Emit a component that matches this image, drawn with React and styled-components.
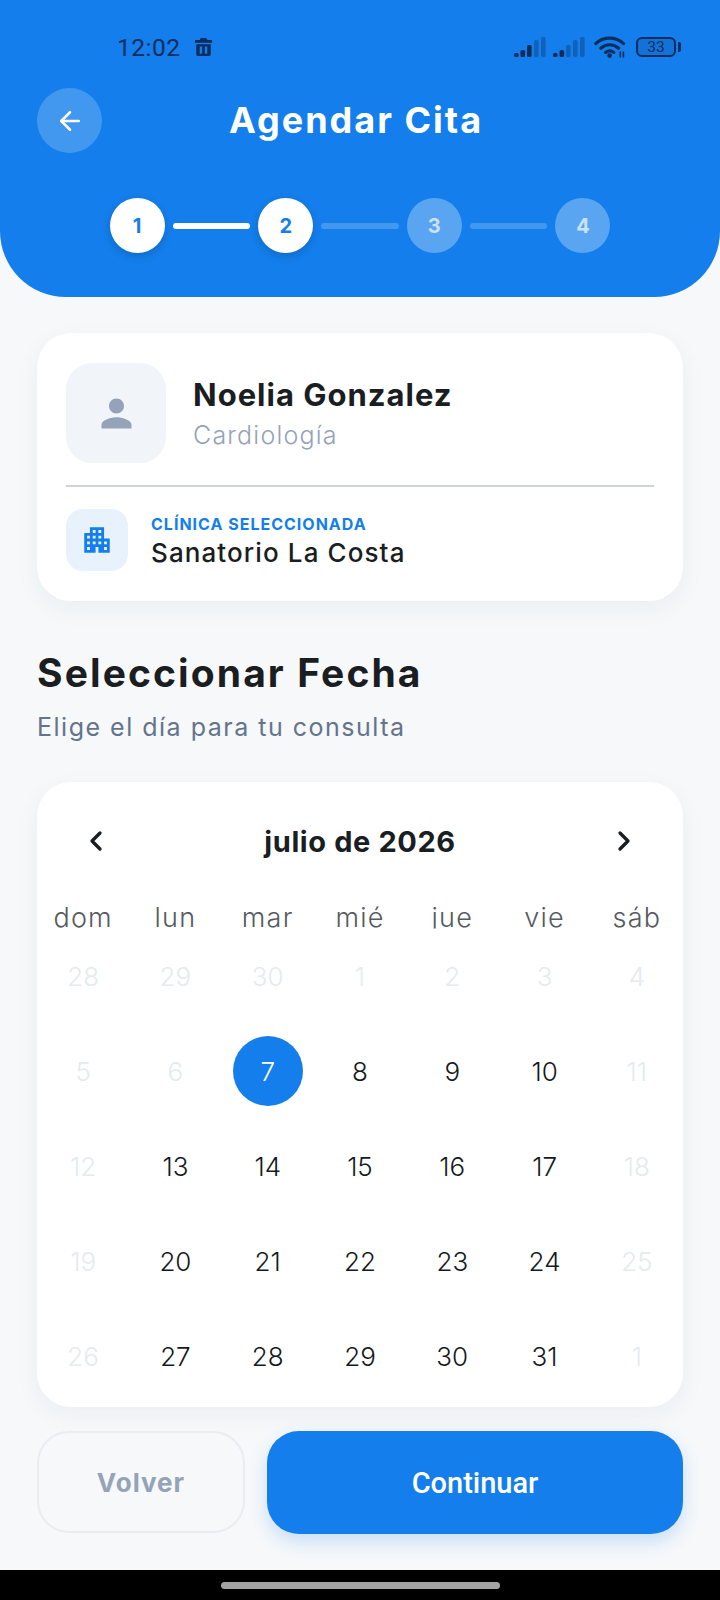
import React from "react";
import styled, { createGlobalStyle } from "styled-components";
import { ArrowLeft, ChevronLeft, ChevronRight } from "lucide-react";
import { MdApartment, MdPerson } from "react-icons/md";

const Global = createGlobalStyle`
  html, body { margin: 0; padding: 0; background: #f6f8fa; }
  * { box-sizing: border-box; }
`;
const SANS = `Inter, "Noto Sans", sans-serif`;
const BLUE = "#137eec";
const INK = "#1a1d21";
const NAVY = "#0b2d5c";

const Screen = styled.div`
  width: 720px; height: 1600px; display: flex; flex-direction: column;
  background: #f6f8fa; font-family: ${SANS}; overflow: hidden;
`;
const Header = styled.header`
  height: 297px; flex: none; background: ${BLUE};
  border-radius: 0 0 66px 66px; padding-top: 30px;
`;
const StatusBar = styled.div`
  height: 34px; display: flex; align-items: center; padding: 0 44px 0 117px;
  color: ${NAVY};
`;
const Clock = styled.span`
  font: 400 24.5px "Roboto", sans-serif; letter-spacing: .5px;
`;
const StatusRight = styled.div`
  margin-left: auto; display: flex; align-items: center;
`;
const Battery = styled.div`
  width: 40px; height: 20px; margin-left: 10px; border: 2px solid ${NAVY}; border-radius: 6px;
  background: rgba(11,45,92,.14); display: flex; align-items: center; justify-content: center;
  font: 400 15.5px "Roboto", sans-serif; position: relative;
  &::after {
    content: ""; position: absolute; right: -7px; top: 3px; width: 3px; height: 10px;
    background: ${NAVY}; border-radius: 0 2px 2px 0;
  }
`;
const TitleRow = styled.div`
  margin-top: 24px; padding: 0 45px 0 37px; display: grid; grid-template-columns: 65px 1fr 65px;
  align-items: center;
`;
const BackButton = styled.button`
  width: 65px; height: 65px; border: 0; border-radius: 50%; padding: 0;
  background: rgba(255,255,255,.2); color: #fff; display: flex; align-items: center; justify-content: center;
`;
const Title = styled.h1`
  margin: -2px 0 0; text-align: center; color: #fff; font-size: 36px; font-weight: 700; letter-spacing: 2px;
`;
const Stepper = styled.div`
  margin-top: 45px; display: flex; align-items: center; justify-content: center; gap: 8px;
`;
const Step = styled.div`
  width: 55px; height: 55px; border-radius: 50%; display: flex; align-items: center; justify-content: center;
  font-size: 20px; font-weight: 700;
  background: ${p => (p.$on ? "#fff" : "rgba(255,255,255,.3)")};
  color: ${p => (p.$on ? BLUE : "rgba(255,255,255,.7)")};
  box-shadow: ${p => (p.$on ? "0 3px 8px rgba(0,0,0,.16)" : "none")};
`;
const StepLine = styled.div`
  width: 77.6px; height: 6px; border-radius: 3px;
  background: ${p => (p.$on ? "#fff" : "rgba(255,255,255,.2)")};
`;
const Main = styled.main`
  flex: 1; padding: 36px 37px 0; display: flex; flex-direction: column;
`;
const Card = styled.section`
  background: #fff; border-radius: 34px; box-shadow: 0 8px 24px rgba(30,50,80,.05);
`;
const DoctorCard = styled(Card)`
  padding: 30px 29px;
`;
const DoctorRow = styled.div`
  display: flex; align-items: center; gap: 27px;
`;
const Avatar = styled.div`
  width: 100px; height: 100px; border-radius: 26px; background: #f1f5f9; color: #94a3b8;
  display: flex; align-items: center; justify-content: center;
`;
const DoctorText = styled.div`
  padding-top: 2px;
`;
const DoctorName = styled.div`
  font-size: 31px; font-weight: 700; color: ${INK}; line-height: 38px; letter-spacing: 1px;
`;
const Specialty = styled.div`
  font-size: 25px; font-weight: 300; color: #94a3b8; line-height: 34px; margin-top: 4px; letter-spacing: 1.2px;
`;
const Divider = styled.hr`
  margin: 22px 0; border: 0; height: 2px; background: #cfd2d6;
`;
const ClinicRow = styled.div`
  display: flex; align-items: center; gap: 23px;
`;
const ClinicIcon = styled.div`
  width: 62px; height: 62px; border-radius: 17px; background: #e7f2fd; color: ${BLUE};
  display: flex; align-items: center; justify-content: center;
`;
const ClinicText = styled.div`
  padding-top: 2px;
`;
const ClinicLabel = styled.div`
  font-size: 16px; font-weight: 700; color: ${BLUE}; letter-spacing: 1px; line-height: 20px;
`;
const ClinicName = styled.div`
  font-size: 26px; font-weight: 500; color: ${INK}; line-height: 32px; margin-top: 3px; letter-spacing: 1.1px;
`;
const SectionTitle = styled.h2`
  margin: 48px 0 0; font-size: 39px; font-weight: 700; color: ${INK}; line-height: 48px; letter-spacing: 2.1px;
`;
const SectionSub = styled.p`
  margin: 14px 0 0; font-size: 25px; font-weight: 400; color: #64748b; line-height: 32px; letter-spacing: 1.5px;
`;
const Calendar = styled(Card)`
  margin-top: 39px; padding-top: 27px; height: 625px; overflow: hidden;
`;
const MonthRow = styled.div`
  height: 64px; padding: 0 43px; display: flex; align-items: center; justify-content: space-between; color: ${INK};
`;
const MonthName = styled.div`
  font-size: 29px; font-weight: 700; color: ${INK}; letter-spacing: .6px;
`;
const Grid = styled.div`
  display: grid; grid-template-columns: repeat(7, 1fr); margin-top: 29px;
`;
const Weekday = styled.div`
  height: 32px; margin-bottom: -5.5px; clip-path: inset(0 0 5.5px 0); text-align: center;
  font-size: 27px; font-weight: 300; color: #555a60; line-height: 32px; letter-spacing: 1.2px;
`;
const DayCell = styled.div`
  height: 95px; display: flex; align-items: center; justify-content: center;
`;
const Day = styled.div`
  width: 70px; height: 70px; border-radius: 50%; display: flex; align-items: center; justify-content: center;
  font-size: 26px; font-weight: 300;
  background: ${p => (p.$selected ? BLUE : "transparent")};
  color: ${p => (p.$selected ? "#fff" : p.$muted ? "#e6eaef" : "#15181c")};
`;
const Actions = styled.div`
  margin-top: 24px; display: flex; gap: 22px;
`;
const GhostButton = styled.button`
  width: 208px; height: 102px; border-radius: 32px; border: 2px solid #e9edf2; background: transparent;
  color: #94a3b8; font: 700 26px ${SANS}; letter-spacing: 1px;
`;
const PrimaryButton = styled.button`
  flex: 1; height: 103px; border-radius: 32px; border: 0; background: ${BLUE}; color: #fff;
  font: 500 29px "Roboto", sans-serif; box-shadow: 0 8px 18px rgba(19,126,236,.2);
`;
const NavBar = styled.div`
  height: 30px; flex: none; background: #000; display: flex; justify-content: center; padding-top: 12px;
`;
const NavPill = styled.div`
  width: 279px; height: 7px; border-radius: 4px; background: #a3a3a3;
`;

const Trash = () => (
  <svg width="19" height="20" viewBox="0 0 20 20" style={{ marginLeft: 13 }}>
    <path fill={NAVY} d="M7 0.5h6l1 2h5v3H1v-3h5zM2.4 7h15.2v10.5a2 2 0 0 1-2 2H4.4a2 2 0 0 1-2-2zM6 9.5v7.5h2.6V9.5zm5.4 0v7.5H14V9.5z" />
  </svg>
);
const Signal = ({ dark, ml }) => (
  <svg width="32" height="20" viewBox="0 0 32 20" style={{ marginLeft: ml }}>
    {[[0, 16, 4], [6.5, 13, 7], [13, 8, 12], [20, 3, 17], [27, 0, 20]].map(([x, y, h], i) => (
      <rect key={i} x={x} y={y} width="4.6" height={h} rx="1.6" fill={NAVY} opacity={i < dark ? 1 : 0.35} />
    ))}
  </svg>
);
const Wifi = () => (
  <svg width="32" height="22" viewBox="0 0 32 22" style={{ marginLeft: 9 }}>
    <g fill="none" stroke={NAVY} strokeWidth="3.2" strokeLinecap="round">
      <path d="M1.8 7.6C9.6 .4 21.4 .4 29.6 7.6" />
      <path d="M6.8 12.2c5.2-4.6 12.6-4.6 17.8 0" />
      <path d="M11.6 16.4c2.6-2 5.6-2 8.2 0" />
    </g>
    <circle cx="15.6" cy="19.6" r="2.3" fill={NAVY} />
    <path d="M25.5 15.5h1.6v6h-1.6zM28.6 15.5h1.6v6h-1.6z" fill={NAVY} />
  </svg>
);

const WEEK = ["dom", "lun", "mar", "mié", "jue", "vie", "sáb"];
const DAYS = [
  28, 29, 30, 1, 2, 3, 4,
  5, 6, 7, 8, 9, 10, 11,
  12, 13, 14, 15, 16, 17, 18,
  19, 20, 21, 22, 23, 24, 25,
  26, 27, 28, 29, 30, 31, 1,
];
const isMuted = i => i < 7 || i % 7 === 0 || i % 7 === 6 || (i >= 7 && i < 9);

export default function App() {
  return (
    <Screen>
      <Global />
      <Header>
        <StatusBar>
          <Clock>12:02</Clock>
          <Trash />
          <StatusRight>
            <Signal dark={3} ml={0} />
            <Signal dark={2} ml={7} />
            <Wifi />
            <Battery>33</Battery>
          </StatusRight>
        </StatusBar>
        <TitleRow>
          <BackButton aria-label="Volver"><ArrowLeft size={30} strokeWidth={2} /></BackButton>
          <Title>Agendar Cita</Title>
        </TitleRow>
        <Stepper>
          <Step $on>1</Step>
          <StepLine $on />
          <Step $on>2</Step>
          <StepLine />
          <Step>3</Step>
          <StepLine />
          <Step>4</Step>
        </Stepper>
      </Header>
      <Main>
        <DoctorCard>
          <DoctorRow>
            <Avatar><MdPerson size={45} /></Avatar>
            <DoctorText>
              <DoctorName>Noelia Gonzalez</DoctorName>
              <Specialty>Cardiología</Specialty>
            </DoctorText>
          </DoctorRow>
          <Divider />
          <ClinicRow>
            <ClinicIcon><MdApartment size={34} /></ClinicIcon>
            <ClinicText>
              <ClinicLabel>CLÍNICA SELECCIONADA</ClinicLabel>
              <ClinicName>Sanatorio La Costa</ClinicName>
            </ClinicText>
          </ClinicRow>
        </DoctorCard>
        <SectionTitle>Seleccionar Fecha</SectionTitle>
        <SectionSub>Elige el día para tu consulta</SectionSub>
        <Calendar>
          <MonthRow>
            <ChevronLeft size={32} strokeWidth={2.5} />
            <MonthName>julio de 2026</MonthName>
            <ChevronRight size={32} strokeWidth={2.5} />
          </MonthRow>
          <Grid>
            {WEEK.map(d => <Weekday key={d}>{d}</Weekday>)}
            {DAYS.map((d, i) => (
              <DayCell key={i}>
                <Day $muted={isMuted(i)} $selected={i === 9}>{d}</Day>
              </DayCell>
            ))}
          </Grid>
        </Calendar>
        <Actions>
          <GhostButton>Volver</GhostButton>
          <PrimaryButton>Continuar</PrimaryButton>
        </Actions>
      </Main>
      <NavBar><NavPill /></NavBar>
    </Screen>
  );
}
